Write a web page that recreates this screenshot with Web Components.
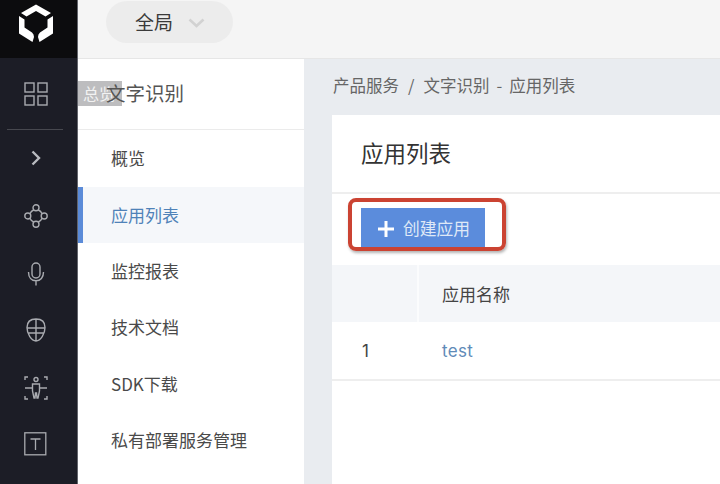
<!DOCTYPE html>
<html><head><meta charset="utf-8"><style>
html,body{margin:0;padding:0;width:720px;height:484px;overflow:hidden;background:#fff}
body{font-family:"Noto Sans CJK SC","Inter",sans-serif}
app-shell{width:720px;height:484px}
</style></head><body>
<app-shell>
  <icon-rail slot="rail"></icon-rail>
  <top-bar slot="top"></top-bar>
  <side-menu slot="menu"></side-menu>
  <content-panel slot="content"></content-panel>
</app-shell>
<script>
function def(name, html){
  customElements.define(name, class extends HTMLElement{
    constructor(){super();this.attachShadow({mode:'open'}).innerHTML=html;}
  });
}
def('app-shell',`<style>
:host{display:grid;grid-template-columns:78px 226px 1fr;grid-template-rows:59px 1fr;overflow:hidden}
::slotted([slot=rail]){grid-row:1/3}
::slotted([slot=top]){grid-column:2/4}
</style><slot name="rail"></slot><slot name="top"></slot><slot name="menu"></slot><slot name="content"></slot>`);

const ic='fill="none" stroke="#a9abb0" stroke-width="1.4"';
def('icon-rail',`<style>
:host{display:flex;flex-direction:column;background:#1c1d26;border-right:1px solid #62646b;box-sizing:border-box;width:78px;height:484px;overflow:hidden}
.logo{height:58px;background:#0c0c0e;display:flex;align-items:flex-start;justify-content:center;flex:none;padding:4px 5px 0 0;box-sizing:border-box}
.it{display:flex;align-items:center;justify-content:center;flex:none;padding-right:6px;box-sizing:border-box}
.sep{height:1px;background:#47484f;margin:0 14px 0 7px;flex:none}
svg{display:block}
</style>
<div class="logo"><svg width="36" height="38" viewBox="0 0 36 38"><path fill="#fff" d="M18 .5 L33 9 L27.500 12.500 L18 7 L8.500 12.500 L3 9Z M1 12 L6.500 15.500 V23.500 L14 28.500 L15.500 30.500 L16 33 L14.500 38 L1 29.500Z M35 12 L29.500 15.500 V23.500 L22 28.500 L20.500 30.500 L20 33 L21.500 38 L35 29.500Z"/></svg></div>
<div class="it" style="height:71px"><svg width="24" height="24" viewBox="0 0 24 24" ${ic}><rect x="1" y="1" width="9" height="9"/><rect x="14" y="1" width="9" height="9"/><rect x="1" y="14" width="9" height="9"/><rect x="14" y="14" width="9" height="9"/></svg></div>
<div class="sep"></div>
<div class="it" style="height:55px"><svg width="12" height="16" viewBox="0 0 12 16" fill="none" stroke="#b9bbc0" stroke-width="2.4"><path d="M2.500 1.500 L9 8 L2.500 14.500"/></svg></div>
<div class="it" style="height:62px"><svg width="24" height="24" viewBox="0 0 24 24" ${ic}><circle cx="12" cy="3.800" r="3"/><circle cx="12" cy="20.200" r="3"/><circle cx="3.800" cy="12" r="3"/><circle cx="20.200" cy="12" r="3"/><path d="M9.800 6 Q7 7 6 9.800 M14.200 6 Q17 7 18 9.800 M6 14.200 Q7 17 9.800 18 M18 14.200 Q17 17 14.200 18"/></svg></div>
<div class="it" style="height:54px"><svg width="18" height="24" viewBox="0 0 18 24" ${ic}><rect x="5" y="1" width="8" height="15" rx="4"/><path d="M1.500 10 C1.500 15.500 4.500 18.800 9 18.800 C13.500 18.800 16.500 15.500 16.500 10 M9 18.800 V23.500"/></svg></div>
<div class="it" style="height:58px"><svg width="20" height="24" viewBox="0 0 20 24" ${ic}><path d="M10 1 C15.500 1 19 4 19 9.500 C19 16 14.500 23 10 23 C5.500 23 1 16 1 9.500 C1 4 4.500 1 10 1Z M1 10 H19 M1.800 15 H18.200 M10 1 V23"/></svg></div>
<div class="it" style="height:57px"><svg width="24" height="24" viewBox="0 0 24 24" ${ic}><path d="M1 4 V1 H4 M20 1 H23 V4 M1 20 V23 H4 M23 20 V23 H20 M1 12 H8.500 M15.500 12 H23"/><circle cx="12" cy="3.500" r="2"/><path d="M8.500 8 H15.500 V15 L14 22 H13 L12.500 17 H11.500 L11 22 H10 L8.500 15Z"/></svg></div>
<div class="it" style="height:56px"><svg width="23" height="24" viewBox="0 0 23 24" fill="none" stroke="#a9abb0" stroke-width="1.300"><rect x=".8" y=".8" width="21" height="22"/><path d="M6.500 7 H16.500 M11.500 7 V18"/></svg></div>`);

def('top-bar',`<style>
:host{display:flex;align-items:flex-start;background:#f5f5f5;border-bottom:1px solid #e6e6e6;box-sizing:border-box;height:59px;padding:1px 0 0 28px}
.pill{display:flex;align-items:center;width:127px;height:42px;border-radius:21px;background:#ececec;color:#3a3a3a;font-size:19px;box-sizing:border-box;padding:0 0 2px 29px;gap:15px;line-height:1}
svg{display:block;margin-top:4px}
</style><div class="pill">全局<svg width="17" height="10" viewBox="0 0 17 10" fill="none" stroke="#d2d2d2" stroke-width="2.600"><path d="M1.500 1.500 L8.500 8 L15.500 1.500"/></svg></div>`);

def('side-menu',`<style>
:host{display:block;position:relative;background:#fff;height:425px}
.head{height:71px;box-sizing:border-box;border-bottom:1px solid #ebebeb;display:flex;align-items:center;padding:0 0 2px 28px;font-size:19.500px;color:#555;line-height:1}
.tip{position:absolute;left:0;top:22px;width:44px;height:25px;background:#bdbdbf;color:#f2f2f2;font-size:16px;line-height:25px;padding-left:5px;box-sizing:border-box;overflow:hidden;white-space:nowrap}
.head span{position:relative}
.items{display:flex;flex-direction:column;padding-top:.5px}
</style>
<div class="tip">总览</div>
<div class="head"><span>文字识别</span></div>
<div class="items"><menu-item>概览</menu-item><menu-item active>应用列表</menu-item><menu-item>监控报表</menu-item><menu-item>技术文档</menu-item><menu-item>SDK下载</menu-item><menu-item>私有部署服务管理</menu-item></div>`);

def('menu-item',`<style>
:host{display:flex;align-items:center;height:56.400px;box-sizing:border-box;padding:0 0 2px 33px;font-size:17px;color:#4a4a4a;line-height:1}
:host([active]){background:#f5f7fa;color:#4f82b8;border-left:5px solid #5b8bd8;padding-left:28px}
</style><slot></slot>`);

def('content-panel',`<style>
:host{display:block;background:#e9ecf0;height:425px;padding-left:28px;overflow:hidden}
.crumb{height:56px;display:flex;align-items:center;font-size:16.500px;color:#666;white-space:nowrap;line-height:1;padding:0 0 3px 1px;box-sizing:border-box}
.sep{margin:0 9px}
.dash{margin:0 7px}
.card{background:#fff;height:369px;display:flex;flex-direction:column}
.title{height:79px;flex:none;box-sizing:border-box;padding:0 0 3px 29px;display:flex;align-items:center;font-size:22.500px;color:#333;border-bottom:2px solid #eeeeee;line-height:1}
.bar{height:71px;flex:none;box-sizing:border-box;padding:14px 0 0 29px;position:relative}
.ring{position:absolute;left:16px;top:4px;width:158px;height:53px;box-sizing:border-box;border:4px solid #cb4332;border-radius:8px;box-shadow:1px 2px 3px rgba(0,0,0,.3)}
.btn{width:124px;height:42px;background:#5b8cdc;color:#dfe9f7;font-size:16.800px;display:flex;align-items:center;gap:8px;padding:0 0 1px 16px;box-sizing:border-box;line-height:1}
.btn svg{flex:none}
.row{display:grid;grid-template-columns:85px 1fr;height:57px;align-items:stretch}
.row>div{display:flex;align-items:center}
.h{background:#f4f6f9;color:#444;font-size:17px}
.h>div:last-child{border-left:2px solid #fbfcfd;padding-left:23px}
.d{border-bottom:2px solid #eeeeee;height:59px;box-sizing:border-box;font-size:17px;color:#444}
.d>div:first-child{padding-left:30px;font-family:Inter,sans-serif}
.d>div:last-child{padding-left:25px;color:#5f8bb8;font-family:Inter,sans-serif;letter-spacing:.3px}
</style>
<div class="crumb">产品服务<span class="sep">/</span>文字识别<span class="dash">-</span>应用列表</div>
<div class="card">
<div class="title">应用列表</div>
<div class="bar"><div class="btn"><svg width="18" height="18" viewBox="0 0 18 18"><path fill="#fff" d="M7.500 1 H10.500 V7.500 H17 V10.500 H10.500 V17 H7.500 V10.500 H1 V7.500 H7.500Z"/></svg>创建应用</div><div class="ring"></div></div>
<div class="row h"><div></div><div>应用名称</div></div>
<div class="row d"><div>1</div><div>test</div></div>
</div>`);
</script>
</body></html>
